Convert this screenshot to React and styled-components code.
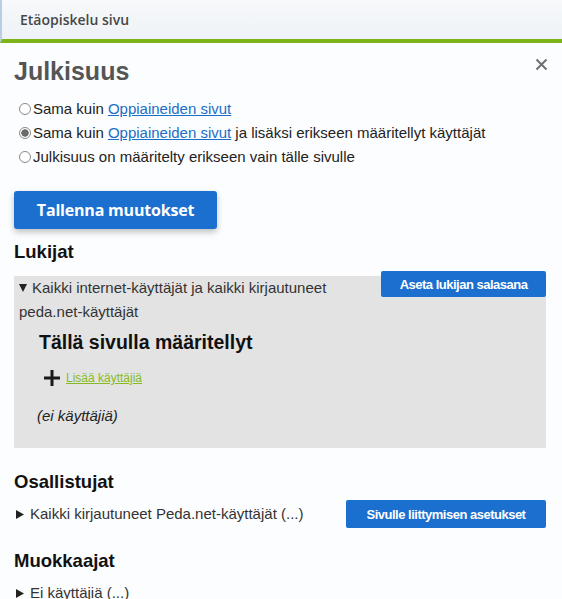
import React from "react";
import styled, { createGlobalStyle } from "styled-components";

const Global = createGlobalStyle`
  html, body { margin: 0; padding: 0; }
  body {
    background: #fcfdfe;
    font-family: "Liberation Sans", Arial, sans-serif;
    color: #222;
    width: 562px;
    height: 599px;
    overflow: hidden;
  }
`;

const TopBar = styled.div`
  height: 39px;
  display: flex;
  align-items: center;
  padding-left: 18px;
  background: linear-gradient(180deg, #f7f9fb 0%, #eef2f6 100%);
  border-left: 2px solid #b8cfe3;
  border-bottom: 4px solid #7db518;
  box-sizing: content-box;
  font-family: "Open Sans", "Noto Sans", sans-serif;
  font-weight: 600;
  font-size: 14px;
  color: #474747;
`;

const Dialog = styled.div`
  position: relative;
  padding: 0 16px 0 14px;
`;

const Title = styled.h1`
  margin: 0;
  padding-top: 13px;
  font-size: 25px;
  line-height: 30px;
  font-weight: bold;
  color: #555;
`;

const Close = styled.button`
  position: absolute;
  top: 12px;
  right: 12px;
  width: 18px;
  height: 18px;
  padding: 0;
  border: 0;
  background: none;
  display: flex;
  align-items: center;
  justify-content: center;
  cursor: pointer;
`;

const Radios = styled.div`
  display: flex;
  flex-direction: column;
  margin-top: 10px;
  padding-left: 5px;
`;

const RadioRow = styled.label`
  display: flex;
  align-items: center;
  height: 24px;
  font-size: 15px;
  color: #222;
`;

const Radio = styled.input.attrs({ type: "radio" })`
  appearance: none;
  width: 12px;
  height: 12px;
  margin: 1px 2px 0 0;
  border: 1px solid #8a8a8a;
  border-radius: 50%;
  background: #fff;
  box-sizing: border-box;
  &:checked {
    background: radial-gradient(circle, #6a6a6a 0 3.4px, #fff 4px);
  }
`;

const Link = styled.a`
  color: #1b6ec6;
  text-decoration: underline;
  margin: 0 4px;
`;

const SaveButton = styled.button`
  margin-top: 23px;
  width: 203px;
  height: 38px;
  border: 0;
  border-radius: 3px;
  background: #1a6fcf;
  color: #fff;
  font-family: "Open Sans", "Noto Sans", sans-serif;
  font-weight: 700;
  font-size: 16px;
  box-shadow: 0 3px 6px rgba(0, 0, 0, 0.25);
  letter-spacing: -0.2px;
`;

const SectionTitle = styled.h2`
  margin: ${(p) => p.$mt || 0}px 0 0 0;
  font-size: 18.5px;
  line-height: 22px;
  font-weight: bold;
  color: #111;
`;

const GrayBox = styled.div`
  margin-top: 13px;
  background: #e3e3e3;
  padding-bottom: 22px;
`;

const BoxHead = styled.div`
  display: flex;
  align-items: flex-start;
`;

const Summary = styled.div`
  flex: 1;
  padding-left: 5px;
  font-size: 15px;
  line-height: 24px;
  color: #333;
`;

const SmallButton = styled.button`
  flex: none;
  margin-top: ${(p) => p.$mt || 0}px;
  width: ${(p) => p.$w}px;
  height: ${(p) => p.$h}px;
  border: 0;
  border-radius: 2px;
  background: #1a6fcf;
  color: #fff;
  font-family: "Liberation Sans Narrow", "Liberation Sans", Arial, sans-serif;
  font-weight: 700;
  font-size: 13px;
  letter-spacing: -0.5px;
  padding: 0;
`;

const Inner = styled.div`
  padding-left: 25px;
  display: flex;
  flex-direction: column;
`;

const InnerTitle = styled.h3`
  margin: 6px 0 0 0;
  font-size: 19.5px;
  line-height: 24px;
  font-weight: bold;
  color: #111;
`;

const AddRow = styled.div`
  display: flex;
  align-items: center;
  gap: 6px;
  margin-top: 16px;
  padding-left: 5px;
`;

const GreenLink = styled.a`
  color: #86bb22;
  text-decoration: underline;
  font-size: 12px;
`;

const Empty = styled.div`
  margin-top: 20px;
  font-style: italic;
  font-size: 15px;
  line-height: 20px;
  color: #222;
  margin-left: -2px;
`;

const ListRow = styled.div`
  display: flex;
  align-items: center;
  justify-content: space-between;
  margin-top: ${(p) => p.$mt || 0}px;
`;

const Toggle = styled.div`
  display: flex;
  align-items: center;
  font-size: 15px;
  line-height: 20px;
  color: #333;
  padding-left: 2px;
`;

const TriIcon = styled.svg`
  display: inline-block;
  vertical-align: ${(p) => (p.$inline ? "1px" : "baseline")};
  margin-right: ${(p) => p.$gap || 6}px;
  flex: none;
`;

const Down = () => (
  <TriIcon $inline $gap={5} width="8" height="8" viewBox="0 0 8 8">
    <path d="M0 0 H8 L4 8 Z" fill="#222" />
  </TriIcon>
);

const Right = () => (
  <TriIcon $gap={6} width="8" height="9" viewBox="0 0 8 9">
    <path d="M0 0 L8 4.5 L0 9 Z" fill="#222" />
  </TriIcon>
);

export default function App() {
  return (
    <>
      <Global />
      <TopBar>Etäopiskelu sivu</TopBar>
      <Dialog>
        <Title>Julkisuus</Title>
        <Close aria-label="close">
          <svg width="13" height="13" viewBox="0 0 13 13">
            <path d="M1.5 1.5 L11.5 11.5 M11.5 1.5 L1.5 11.5" stroke="#6f6f6f" strokeWidth="2" />
          </svg>
        </Close>
        <Radios>
          <RadioRow>
            <Radio name="j" />
            Sama kuin<Link href="#">Oppiaineiden sivut</Link>
          </RadioRow>
          <RadioRow>
            <Radio name="j" defaultChecked />
            Sama kuin<Link href="#">Oppiaineiden sivut</Link>ja lisäksi erikseen määritellyt käyttäjät
          </RadioRow>
          <RadioRow>
            <Radio name="j" />
            Julkisuus on määritelty erikseen vain tälle sivulle
          </RadioRow>
        </Radios>
        <SaveButton>Tallenna muutokset</SaveButton>
        <SectionTitle $mt={12}>Lukijat</SectionTitle>
        <GrayBox>
          <BoxHead>
            <Summary>
              <Down />Kaikki internet-käyttäjät ja kaikki kirjautuneet peda.net-käyttäjät
            </Summary>
            <SmallButton $mt={-5} $w={165} $h={26}>Aseta lukijan salasana</SmallButton>
          </BoxHead>
          <Inner>
            <InnerTitle>Tällä sivulla määritellyt</InnerTitle>
            <AddRow>
              <svg width="16" height="16" viewBox="0 0 16 16">
                <path d="M8 0 V16 M0 8 H16" stroke="#1a1a1a" strokeWidth="3" />
              </svg>
              <GreenLink href="#">Lisää käyttäjiä</GreenLink>
            </AddRow>
            <Empty>(ei käyttäjiä)</Empty>
          </Inner>
        </GrayBox>
        <SectionTitle $mt={23}>Osallistujat</SectionTitle>
        <ListRow $mt={7}>
          <Toggle>
            <Right />Kaikki kirjautuneet Peda.net-käyttäjät (...)
          </Toggle>
          <SmallButton $w={200} $h={28}>Sivulle liittymisen asetukset</SmallButton>
        </ListRow>
        <SectionTitle $mt={22}>Muokkaajat</SectionTitle>
        <ListRow $mt={11}>
          <Toggle>
            <Right />Ei käyttäjiä (...)
          </Toggle>
        </ListRow>
      </Dialog>
    </>
  );
}
